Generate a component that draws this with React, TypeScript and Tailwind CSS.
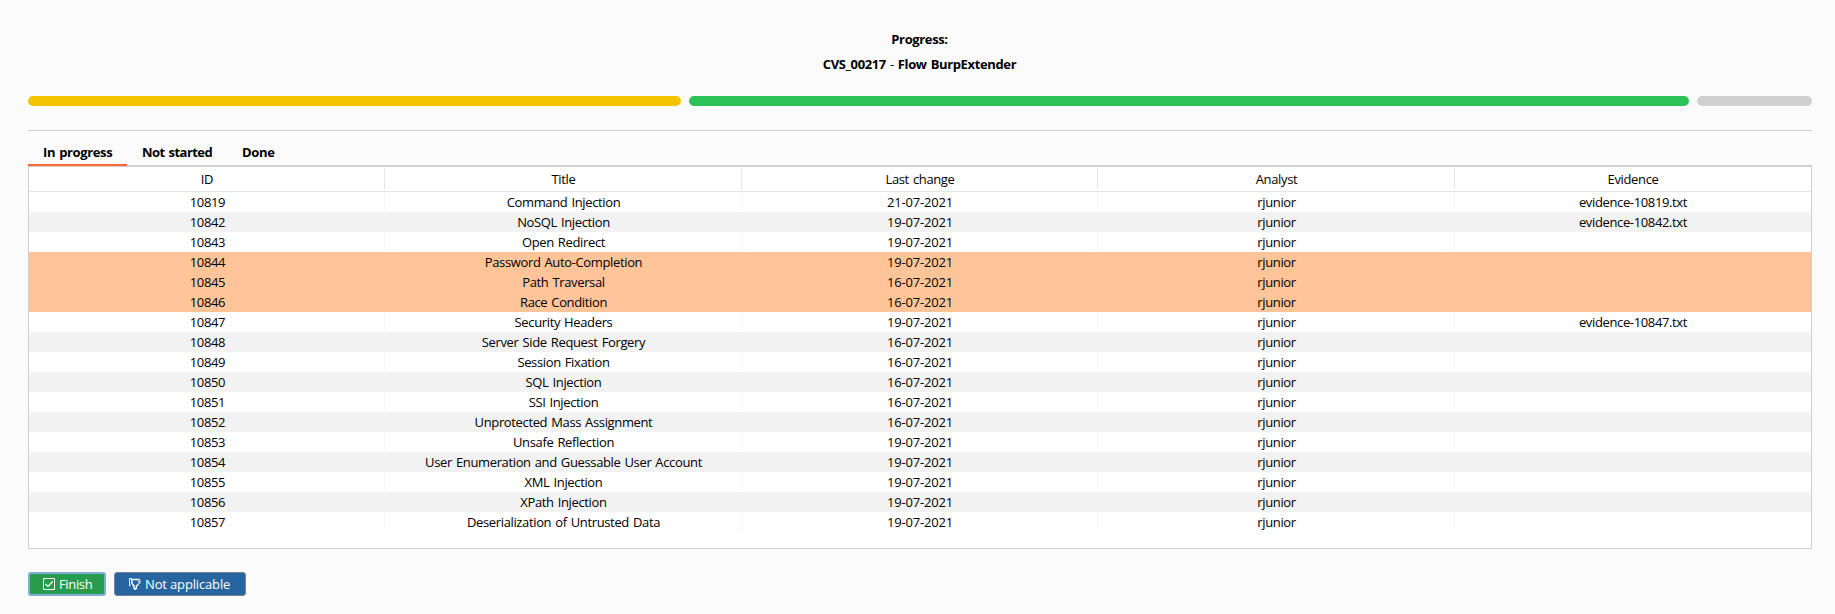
import type { ReactNode } from "react";

type Entry = { id: string; title: string; date: string; evidence?: string };

const entries: Entry[] = [
  { id: "10819", title: "Command Injection", date: "21-07-2021", evidence: "evidence-10819.txt" },
  { id: "10842", title: "NoSQL Injection", date: "19-07-2021", evidence: "evidence-10842.txt" },
  { id: "10843", title: "Open Redirect", date: "19-07-2021" },
  { id: "10844", title: "Password Auto-Completion", date: "19-07-2021" },
  { id: "10845", title: "Path Traversal", date: "16-07-2021" },
  { id: "10846", title: "Race Condition", date: "16-07-2021" },
  { id: "10847", title: "Security Headers", date: "19-07-2021", evidence: "evidence-10847.txt" },
  { id: "10848", title: "Server Side Request Forgery", date: "16-07-2021" },
  { id: "10849", title: "Session Fixation", date: "16-07-2021" },
  { id: "10850", title: "SQL Injection", date: "16-07-2021" },
  { id: "10851", title: "SSI Injection", date: "16-07-2021" },
  { id: "10852", title: "Unprotected Mass Assignment", date: "16-07-2021" },
  { id: "10853", title: "Unsafe Reflection", date: "19-07-2021" },
  { id: "10854", title: "User Enumeration and Guessable User Account", date: "19-07-2021" },
  { id: "10855", title: "XML Injection", date: "19-07-2021" },
  { id: "10856", title: "XPath Injection", date: "19-07-2021" },
  { id: "10857", title: "Deserialization of Untrusted Data", date: "19-07-2021" },
];

const selected = ["10844", "10845", "10846"];
const headings = ["ID", "Title", "Last change", "Analyst", "Evidence"];
const columns = "grid grid-cols-[356px_357px_356px_357px_356px]";

function Cell({ children, line }: { children?: ReactNode; line: string }) {
  return <div className={`border-r pl-px last:border-r-0 last:pl-0 ${line}`}>{children}</div>;
}

function Row({ entry, index }: { entry: Entry; index: number }) {
  const isSelected = selected.includes(entry.id);
  const tone = isSelected ? "bg-[#ffc599]" : index % 2 ? "bg-[#f2f2f2]" : "bg-white";
  const line = isSelected || index % 2 ? "border-transparent" : "border-[#f7f7f7]";
  return (
    <div className={`${columns} h-5 leading-5 text-center ${tone}`}>
      <Cell line={line}>
        <span className="pl-px tracking-[-0.35px]">{entry.id}</span>
      </Cell>
      <Cell line={line}>{entry.title}</Cell>
      <Cell line={line}>
        <span className="tracking-[-0.2px]">{entry.date}</span>
      </Cell>
      <Cell line={line}>rjunior</Cell>
      <Cell line={line}>{entry.evidence}</Cell>
    </div>
  );
}

export default function App() {
  return (
    <div className="h-[614px] w-[1835px] bg-[#fbfbfb] pl-7 pr-[23px] pt-[27px] font-['Open_Sans',sans-serif] text-[13px] tracking-[-0.36px] [word-spacing:1px] text-black">
      <div className="pr-px text-center font-bold leading-[25px]">
        <div>Progress:</div>
        <div>
          CVS_00217 <span className="font-normal">-</span> Flow BurpExtender
        </div>
      </div>

      <div className="mt-[19px] flex h-2.5 gap-2">
        <div className="w-[653px] rounded-full bg-[#f4c400]" />
        <div className="w-[1000px] rounded-full bg-[#2dc258]" />
        <div className="w-[115px] rounded-full bg-[#d0d0d0]" />
      </div>

      <div className="mt-6 h-px bg-[#cfcfcf]" />

      <div className="mt-2 flex h-[27px] font-bold">
        <div className="relative z-10 w-[99px] border-b-2 border-[#ff6633] pl-[15px] leading-[26px]">In progress</div>
        <div className="w-[100px] pl-[15px] leading-[26px] tracking-[-0.53px]">Not started</div>
        <div className="w-[63px] pl-[15px] leading-[26px]">Done</div>
      </div>

      <div className="-mt-px h-[384px] border border-t-2 border-[#cfcfcf] bg-white">
        <div className={`${columns} h-[25px] border-b border-[#e5e5e5] py-px text-center leading-[22px]`}>
          {headings.map((heading) => (
            <Cell key={heading} line="border-[#e5e5e5]">
              {heading}
            </Cell>
          ))}
        </div>
        {entries.map((entry, index) => (
          <Row key={entry.id} entry={entry} index={index} />
        ))}
      </div>

      <div className="mt-[23px] flex gap-2 text-white">
        <button className="flex h-6 w-[78px] items-center rounded-[3px] border-2 border-[#7eaed3] bg-[#289b4c] pl-[13px]">
          <svg className="size-3 shrink-0" viewBox="0 0 12 12" fill="none" stroke="currentColor">
            <path d="M.5.5h11v11H.5z" />
            <path d="M2.5 6 5 8.5 9.7 3.5" strokeWidth="1.2" />
          </svg>
          <span className="ml-1 leading-5">Finish</span>
        </button>
        <button className="flex h-6 w-[132px] items-center rounded-[3px] border border-[#7d8299] bg-[#26659f] pl-3.5">
          <svg className="size-3 shrink-0" viewBox="0 0 12 12" fill="none" stroke="currentColor">
            <path d="M2.7.5H.5v7.3h1.3" />
            <path d="M9 1.5H2.9v4.3L5 7.8v2.4l1.2 1.1 1.2-1.1V8L9.4 6.3" strokeWidth="1.5" />
            <path d="M8.8 1.5h2.4M9 3.3h2.9M9 5.2h2.6" strokeWidth="1.3" opacity=".8" />
          </svg>
          <span className="ml-1 whitespace-nowrap leading-5 tracking-[-0.15px]">Not applicable</span>
        </button>
      </div>
    </div>
  );
}
